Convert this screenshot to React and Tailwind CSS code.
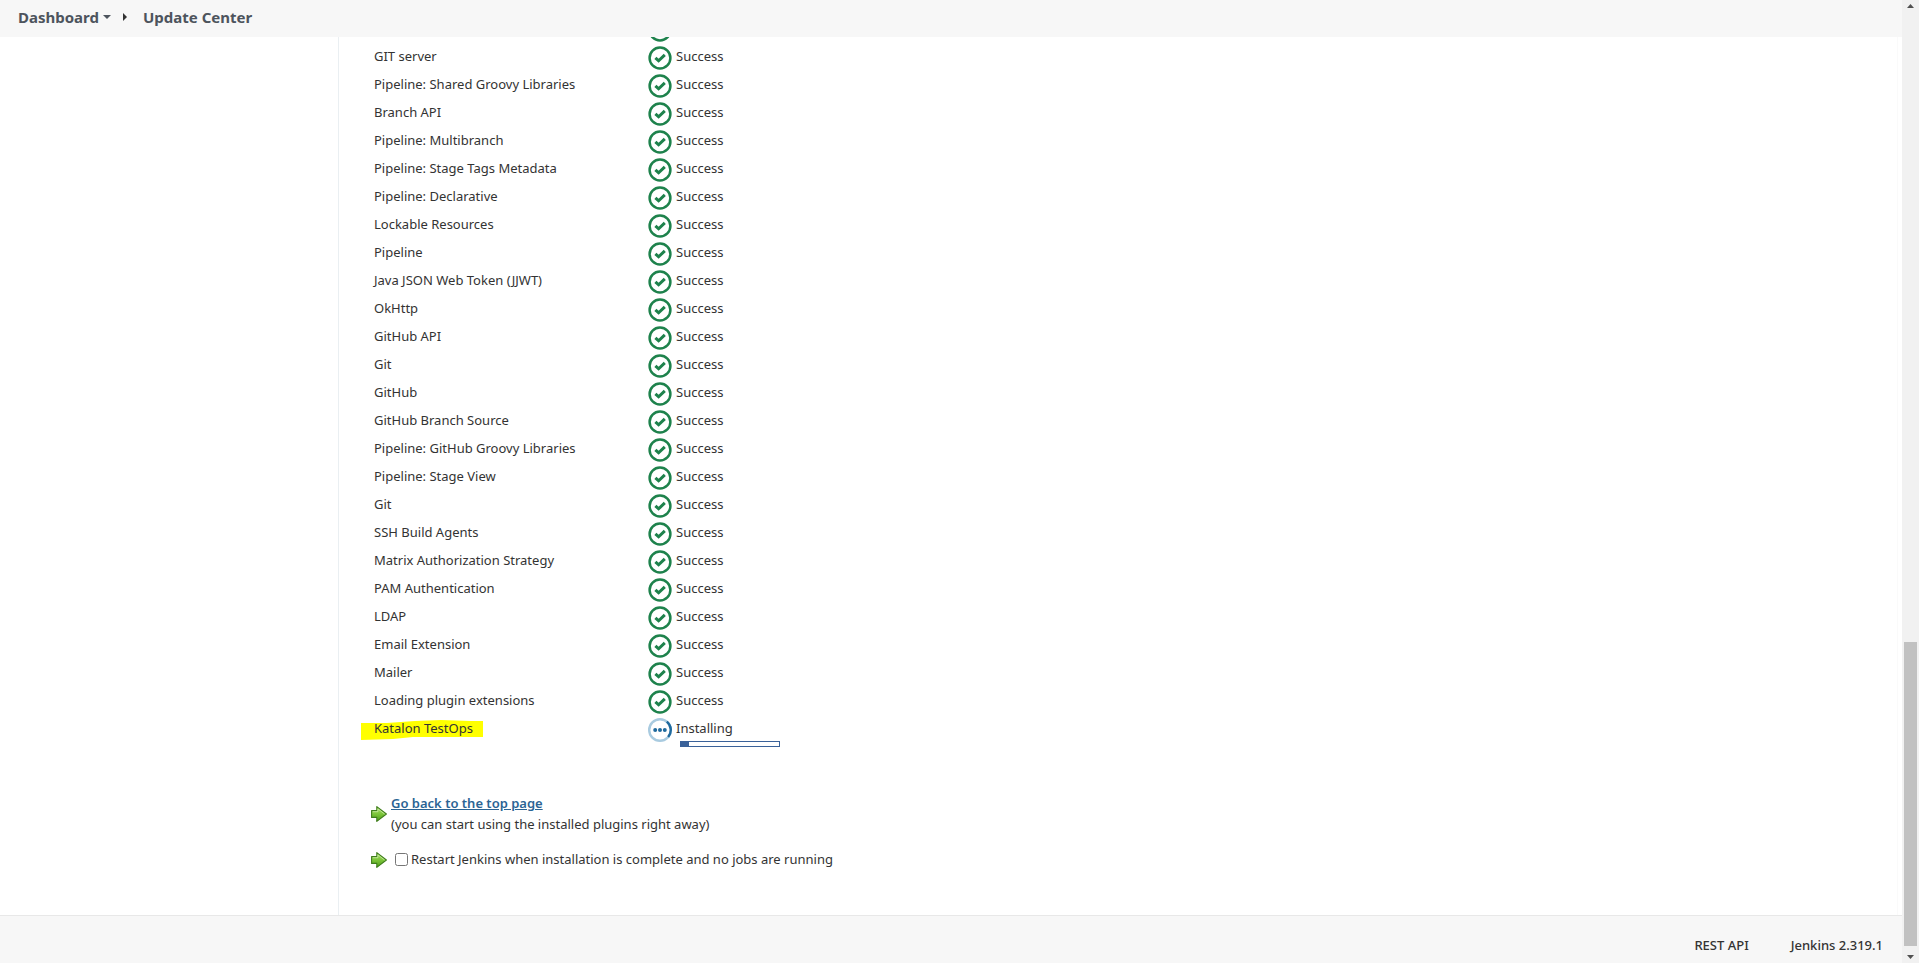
const installed = [
  'GIT server',
  'Pipeline: Shared Groovy Libraries',
  'Branch API',
  'Pipeline: Multibranch',
  'Pipeline: Stage Tags Metadata',
  'Pipeline: Declarative',
  'Lockable Resources',
  'Pipeline',
  'Java JSON Web Token (JJWT)',
  'OkHttp',
  'GitHub API',
  'Git',
  'GitHub',
  'GitHub Branch Source',
  'Pipeline: GitHub Groovy Libraries',
  'Pipeline: Stage View',
  'Git',
  'SSH Build Agents',
  'Matrix Authorization Strategy',
  'PAM Authentication',
  'LDAP',
  'Email Extension',
  'Mailer',
  'Loading plugin extensions',
];

function SuccessIcon() {
  return (
    <svg className="mt-0.5 size-6 shrink-0" viewBox="0 0 24 24" fill="none" stroke="#1e824c" aria-hidden="true">
      <circle cx="12" cy="12" r="10.4" strokeWidth="2.5" />
      <path d="M7.4 11.8l3.2 3 6.2-6" strokeWidth="3" />
    </svg>
  );
}

function RunningIcon() {
  return (
    <svg className="mt-0.5 size-6 shrink-0" viewBox="0 0 24 24" fill="none" aria-hidden="true">
      <circle cx="12" cy="12" r="10.8" stroke="#a9cbe0" strokeWidth="2.4" />
      <path d="M18.8 3.6A10.8 10.8 0 0 1 20.2 19" stroke="#1f6a9e" strokeWidth="2.4" />
      <g fill="#1f6a9e">
        <circle cx="7.2" cy="12" r="2" />
        <circle cx="12" cy="12" r="2" />
        <circle cx="16.8" cy="12" r="2" />
      </g>
    </svg>
  );
}

function ArrowIcon() {
  return (
    <svg className="size-4 shrink-0" viewBox="0 0 16 16" aria-hidden="true">
      <defs>
        <linearGradient id="arrow-fill" x1="0" y1="0" x2="0" y2="1">
          <stop offset="0" stopColor="#a9dd6a" />
          <stop offset="0.5" stopColor="#7cc53a" />
          <stop offset="1" stopColor="#4f9d18" />
        </linearGradient>
      </defs>
      <path d="M0.6 4.6h5.2V0.6L15.4 8l-9.6 7.4v-4H0.6z" fill="url(#arrow-fill)" stroke="#3f7d1c" strokeWidth="1.1" strokeLinejoin="round" />
      <path d="M1.7 5.7h5.2V2.9L13.6 8" fill="none" stroke="#cdeea6" strokeWidth="0.8" />
    </svg>
  );
}

function PluginRow({ name }) {
  return (
    <tr className="h-7 align-top">
      <td className="w-[274px] p-0">{name}</td>
      <td className="p-0">
        <div className="flex gap-1">
          <SuccessIcon />
          {name && <span>Success</span>}
        </div>
      </td>
    </tr>
  );
}

export default function App() {
  return (
    <div className="flex h-screen bg-white font-['Noto_Sans',sans-serif] text-[13px] leading-6 text-[#333]">
      <div className="flex min-w-0 flex-1 flex-col">
        <header className="flex h-[37px] shrink-0 items-center bg-[#f7f7f7] pb-1 pl-[18px] text-[15px] font-bold text-[#4d545d]">
          <nav className="flex items-center" aria-label="Breadcrumb">
            <a href="#dashboard">Dashboard</a>
            <svg className="ml-1 h-1 w-2" viewBox="0 0 8 4" fill="#4d545d" aria-hidden="true">
              <path d="M0 0h8L4 4z" />
            </svg>
            <svg className="ml-3 h-2 w-1" viewBox="0 0 4 8" fill="#333" aria-hidden="true">
              <path d="M0 0v8l4-4z" />
            </svg>
            <a href="#update-center" className="ml-4">Update Center</a>
          </nav>
        </header>

        <div className="flex min-h-0 flex-1">
          <aside className="w-[339px] shrink-0 border-r border-[#eaeff2]" />
          <main className="mr-1 flex min-w-0 flex-1 flex-col justify-end overflow-hidden border-r border-[#fafafa] pb-[45px] pl-[35px]">
            <table className="w-[520px] shrink-0 border-collapse">
              <tbody>
                <PluginRow />
                {installed.map((name, i) => (
                  <PluginRow key={i} name={name} />
                ))}
                <tr className="align-top">
                  <td className="w-[274px] p-0">
                    <span className="relative isolate">
                      <svg className="absolute -left-[13px] top-px -z-10 h-5 w-[122px]" viewBox="0 0 122 20" fill="#ff0" aria-hidden="true">
                        <path d="M0 3L26 3 54 1 80 0 110 1 122 1V17L52 17 32 19 0 20z" />
                      </svg>
                      Katalon TestOps
                    </span>
                  </td>
                  <td className="p-0">
                    <div className="flex gap-1">
                      <RunningIcon />
                      <span>Installing</span>
                    </div>
                    <div className="-mt-px ml-8 h-1.5 w-[100px] border border-[#3a6199]" role="progressbar" aria-label="Katalon TestOps" aria-valuenow={8}>
                      <div className="h-full w-2 bg-[#3a6199]" />
                    </div>
                  </td>
                </tr>
              </tbody>
            </table>

            <div className="-ml-[3px] mt-[46px] flex shrink-0 items-center gap-1 leading-[21px]">
              <ArrowIcon />
              <div>
                <a href="#top" className="font-semibold text-[#2b6494] underline">Go back to the top page</a>
                <div>(you can start using the installed plugins right away)</div>
              </div>
            </div>
            <div className="-ml-[3px] mt-[14px] flex shrink-0 items-center gap-2 leading-[21px]">
              <ArrowIcon />
              <div className="flex items-center gap-[3px]">
                <input id="restart" type="checkbox" className="size-[13px]" />
                <label htmlFor="restart">Restart Jenkins when installation is complete and no jobs are running</label>
              </div>
            </div>
          </main>
        </div>

        <footer className="flex h-12 shrink-0 items-center justify-end gap-[42px] border-t border-[#e8e8e8] bg-[#f7f7f7] pr-[19px] pt-2.5 font-medium">
          <a href="#api">REST API</a>
          <a href="#version">Jenkins 2.319.1</a>
        </footer>
      </div>

      <div className="flex w-[17px] shrink-0 flex-col items-center bg-[#f1f1f1]" aria-hidden="true">
        <svg className="size-[17px] shrink-0" viewBox="0 0 17 17" fill="#505050"><path d="M5 8l3.5-4L12 8z" /></svg>
        <div className="flex w-full flex-1 flex-col justify-end px-0.5">
          <div className="h-[304px] bg-[#c1c1c1]" />
        </div>
        <svg className="size-[17px] shrink-0" viewBox="0 0 17 17" fill="#505050"><path d="M5 9l3.5 4L12 9z" /></svg>
      </div>
    </div>
  );
}
